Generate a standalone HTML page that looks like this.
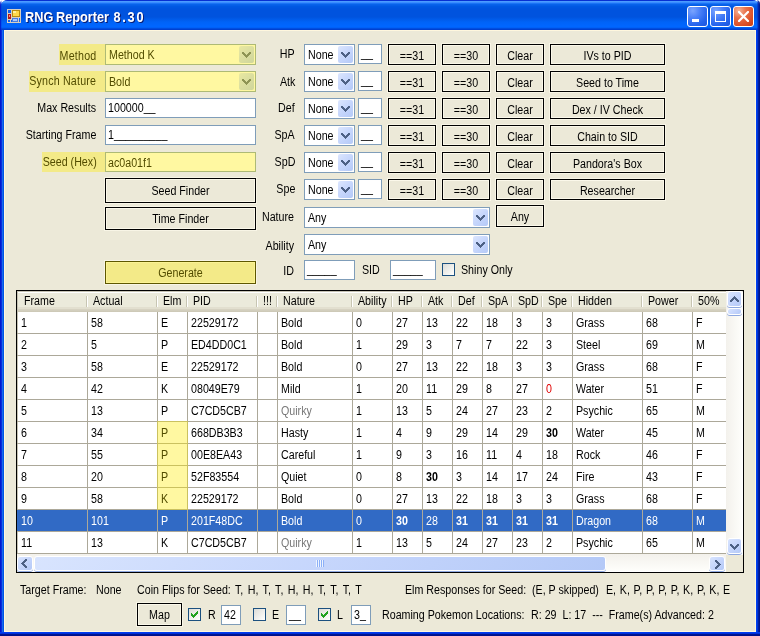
<!DOCTYPE html><html><head><meta charset="utf-8"><style>
html,body{margin:0;padding:0;width:760px;height:636px;overflow:hidden;background:#fff}
.b{position:absolute}
.t{position:absolute;font-family:"Liberation Sans", sans-serif;font-size:12px;line-height:13px;height:13px;white-space:pre;color:#000;transform:scaleX(0.89);transform-origin:0 0;}
.tr{transform-origin:100% 0;text-align:right}
.tc{transform-origin:50% 0;text-align:center}
.y{color:#524C00}
.u{position:relative;top:-1px}
.ddb{border-radius:2px;background:linear-gradient(135deg,#DCE6FE 0%,#C6D6FC 50%,#B4C9F7 100%)}
.sb{border:1px solid #fff;border-radius:3px;background:linear-gradient(135deg,#D8E4FE 0%,#C6D6FC 50%,#B4C9F7 100%);box-shadow:0 1px 0 #8EA8E0}
.cb{box-sizing:border-box;border:1px solid #1C5180;background:linear-gradient(135deg,#DCDCD7 0%,#F5F5F2 70%,#FFFFFF 100%)}
</style></head><body>
<div class="b" style="left:0;top:0;width:760px;height:636px;will-change:transform;overflow:hidden">

<div class="b" style="left:0;top:0;width:760px;height:636px;background:#0055E5;border-radius:8px 8px 0 0"></div>
<div class="b" style="left:0;top:0;width:760px;height:30px;border-radius:8px 8px 0 0;background:linear-gradient(to bottom,#0730D2 0px,#0730D2 1px,#4A9BFF 1px,#4A9BFF 2px,#3A8CFF 2px,#3A8CFF 3px,#1A73F5 3px,#1A73F5 4px,#0862EA 4px,#0862EA 5px,#0059E4 6px,#0053DE 9px,#0053DE 17px,#005AE8 19px,#0063F7 22px,#0066FF 26px,#0066FF 27px,#005CF0 28px,#0040D0 29px,#0040D0 30px)"></div>
<div class="b" style="left:0;top:0;width:4px;height:30px;border-top-left-radius:8px;background:linear-gradient(to right,rgba(0,25,207,0.85) 0,rgba(0,25,207,0.85) 1px,rgba(10,45,219,0.3) 1px,rgba(10,45,219,0.3) 2px,rgba(0,0,0,0) 2px)"></div>
<div class="b" style="left:756px;top:0;width:4px;height:30px;border-top-right-radius:8px;background:linear-gradient(to right,rgba(0,64,240,0) 0,rgba(0,64,240,0) 1px,rgba(0,40,200,0.5) 1px,rgba(0,40,200,0.5) 2px,rgba(0,32,160,0.85) 2px,rgba(0,32,160,0.85) 3px,rgba(0,19,140,0.95) 3px)"></div>
<div class="b" style="left:0;top:30px;width:4px;height:606px;background:linear-gradient(to right,#0019CF 0,#0019CF 1px,#0A2DDB 1px,#0A2DDB 2px,#166AEE 2px,#166AEE 3px,#0055E5 3px)"></div>
<div class="b" style="left:756px;top:30px;width:4px;height:606px;background:linear-gradient(to right,#0040F0 0,#0040F0 1px,#0035D8 1px,#0035D8 2px,#0020A0 2px,#0020A0 3px,#00138C 3px)"></div>
<div class="b" style="left:0;top:632px;width:760px;height:4px;background:linear-gradient(to bottom,#003CF0 0,#003CF0 1px,#0030DA 1px,#0030DA 2px,#00158F 2px,#00158F 3px,#00108A 3px)"></div>
<div class="b " style="left:4px;top:30px;width:752px;height:602px;background:#ECE9D8;border:1px solid #FFF7DE;box-sizing:border-box"></div>
<svg class="b" style="left:7px;top:9px" width="15" height="15" viewBox="0 0 15 15" shape-rendering="crispEdges">
<rect x="0" y="0" width="14" height="14" fill="#D8CFC0"/>
<rect x="1" y="1" width="3" height="3" fill="#1060F0"/>
<rect x="5" y="1" width="8" height="7" fill="#B88A10"/><rect x="6" y="2" width="6" height="5" fill="#FFD84A"/><rect x="6" y="2" width="3" height="2" fill="#FFF0A0"/>
<rect x="1" y="5" width="3" height="5" fill="#B01818"/><rect x="2" y="6" width="1" height="2" fill="#FF8080"/>
<rect x="1" y="11" width="2" height="2" fill="#1060F0"/><rect x="4" y="11" width="1" height="2" fill="#1060F0"/>
<rect x="5" y="9" width="6" height="4" fill="#4A7CE0"/><rect x="6" y="10" width="4" height="2" fill="#A8C8FF"/>
<rect x="12" y="9" width="1" height="4" fill="#1060F0"/>
</svg>
<div class="b" style="left:26px;top:9px;font:bold 14px 'Liberation Sans';color:#0A1A70;white-space:pre;line-height:18px;transform:scaleX(0.91);transform-origin:0 0">RNG<span style="margin-left:-1px"> </span>Reporter <span style="letter-spacing:1.9px;margin-left:1px">8.30</span></div>
<div class="b" style="left:25px;top:8px;font:bold 14px 'Liberation Sans';color:#fff;white-space:pre;line-height:18px;transform:scaleX(0.91);transform-origin:0 0">RNG<span style="margin-left:-1px"> </span>Reporter <span style="letter-spacing:1.9px;margin-left:1px">8.30</span></div>
<div class="b" style="left:687px;top:6px;width:21px;height:21px;box-sizing:border-box;border:1px solid #fff;border-radius:3px;background:radial-gradient(circle at 25% 20%,#7AA4FF 0%,#4A80F8 35%,#2563EC 70%,#1E55DC 100%)"></div>
<div class="b " style="left:692px;top:19px;width:7px;height:3px;background:#fff"></div>
<div class="b" style="left:710px;top:6px;width:21px;height:21px;box-sizing:border-box;border:1px solid #fff;border-radius:3px;background:radial-gradient(circle at 25% 20%,#7AA4FF 0%,#4A80F8 35%,#2563EC 70%,#1E55DC 100%)"></div>
<div class="b" style="left:715px;top:11px;width:11px;height:11px;box-sizing:border-box;border:1px solid #fff;border-top-width:3px"></div>
<div class="b" style="left:733px;top:6px;width:21px;height:21px;box-sizing:border-box;border:1px solid #fff;border-radius:3px;background:radial-gradient(circle at 25% 20%,#F4B498 0%,#E8704A 35%,#DC5028 70%,#C83C12 100%)"></div>
<svg class="b" style="left:738px;top:11px" width="11" height="11" viewBox="0 0 11 11"><path d="M1 1 L10 10 M10 1 L1 10" stroke="#fff" stroke-width="2.2" stroke-linecap="square"/></svg>
<div class="b " style="left:105px;top:44px;width:151px;height:21px;background:#fff;border:1px solid #7F9DB9;box-sizing:border-box"></div>
<div class="b ddb" style="left:239px;top:46px;width:15px;height:17px;"></div>
<svg class="b" style="left:242px;top:52px" width="9" height="6" shape-rendering="crispEdges" fill="#4D6185"><rect x="0" y="0" width="1" height="1"/><rect x="1" y="0" width="1" height="1"/><rect x="7" y="0" width="1" height="1"/><rect x="8" y="0" width="1" height="1"/><rect x="0" y="1" width="1" height="1"/><rect x="1" y="1" width="1" height="1"/><rect x="2" y="1" width="1" height="1"/><rect x="6" y="1" width="1" height="1"/><rect x="7" y="1" width="1" height="1"/><rect x="8" y="1" width="1" height="1"/><rect x="1" y="2" width="1" height="1"/><rect x="2" y="2" width="1" height="1"/><rect x="3" y="2" width="1" height="1"/><rect x="5" y="2" width="1" height="1"/><rect x="6" y="2" width="1" height="1"/><rect x="7" y="2" width="1" height="1"/><rect x="2" y="3" width="1" height="1"/><rect x="3" y="3" width="1" height="1"/><rect x="4" y="3" width="1" height="1"/><rect x="5" y="3" width="1" height="1"/><rect x="6" y="3" width="1" height="1"/><rect x="3" y="4" width="1" height="1"/><rect x="4" y="4" width="1" height="1"/><rect x="5" y="4" width="1" height="1"/><rect x="4" y="5" width="1" height="1"/></svg>
<div class="b " style="left:59px;top:44px;width:197px;height:21px;background:rgba(255,236,0,0.37)"></div>
<div class="t tr y" style="right:663px;top:50px;letter-spacing:0.25px">Method</div>
<div class="t y" style="left:109px;top:49px;">Method K</div>
<div class="b " style="left:105px;top:71px;width:151px;height:21px;background:#fff;border:1px solid #7F9DB9;box-sizing:border-box"></div>
<div class="b ddb" style="left:239px;top:73px;width:15px;height:17px;"></div>
<svg class="b" style="left:242px;top:79px" width="9" height="6" shape-rendering="crispEdges" fill="#4D6185"><rect x="0" y="0" width="1" height="1"/><rect x="1" y="0" width="1" height="1"/><rect x="7" y="0" width="1" height="1"/><rect x="8" y="0" width="1" height="1"/><rect x="0" y="1" width="1" height="1"/><rect x="1" y="1" width="1" height="1"/><rect x="2" y="1" width="1" height="1"/><rect x="6" y="1" width="1" height="1"/><rect x="7" y="1" width="1" height="1"/><rect x="8" y="1" width="1" height="1"/><rect x="1" y="2" width="1" height="1"/><rect x="2" y="2" width="1" height="1"/><rect x="3" y="2" width="1" height="1"/><rect x="5" y="2" width="1" height="1"/><rect x="6" y="2" width="1" height="1"/><rect x="7" y="2" width="1" height="1"/><rect x="2" y="3" width="1" height="1"/><rect x="3" y="3" width="1" height="1"/><rect x="4" y="3" width="1" height="1"/><rect x="5" y="3" width="1" height="1"/><rect x="6" y="3" width="1" height="1"/><rect x="3" y="4" width="1" height="1"/><rect x="4" y="4" width="1" height="1"/><rect x="5" y="4" width="1" height="1"/><rect x="4" y="5" width="1" height="1"/></svg>
<div class="b " style="left:29px;top:71px;width:227px;height:21px;background:rgba(255,236,0,0.37)"></div>
<div class="t tr y" style="right:664px;top:75px;letter-spacing:0.2px">Synch Nature</div>
<div class="t y" style="left:109px;top:76px;">Bold</div>
<div class="t tr " style="right:664px;top:102px;">Max Results</div>
<div class="b " style="left:105px;top:98px;width:151px;height:20px;background:#fff;border:1px solid #7F9DB9;box-sizing:border-box"></div>
<div class="t " style="left:108px;top:102px;">100000<span class="u">__</span></div>
<div class="t tr " style="right:664px;top:129px;">Starting Frame</div>
<div class="b " style="left:105px;top:125px;width:151px;height:20px;background:#fff;border:1px solid #7F9DB9;box-sizing:border-box"></div>
<div class="t " style="left:108px;top:129px;">1<span class="u">_________</span></div>
<div class="b " style="left:105px;top:152px;width:151px;height:20px;background:#fff;border:1px solid #7F9DB9;box-sizing:border-box"></div>
<div class="b " style="left:42px;top:152px;width:214px;height:20px;background:rgba(255,236,0,0.37)"></div>
<div class="t tr y" style="right:663px;top:156px;">Seed (Hex)</div>
<div class="t y" style="left:108px;top:157px;">ac0a01f1</div>
<div class="b " style="left:104px;top:177px;width:153px;height:27px;border:1px solid #F8F5E6;box-sizing:border-box"></div>
<div class="b " style="left:105px;top:178px;width:151px;height:25px;border:1px solid #000;box-sizing:border-box;box-shadow:inset 0 0 0 1px #FBF8EA"></div>
<div class="t tc " style="left:105px;width:151px;top:185px;">Seed Finder</div>
<div class="b " style="left:104px;top:206px;width:153px;height:25px;border:1px solid #F8F5E6;box-sizing:border-box"></div>
<div class="b " style="left:105px;top:207px;width:151px;height:23px;border:1px solid #000;box-sizing:border-box;box-shadow:inset 0 0 0 1px #FBF8EA"></div>
<div class="t tc " style="left:105px;width:151px;top:213px;">Time Finder</div>
<div class="b " style="left:104px;top:260px;width:153px;height:25px;border:1px solid #F8F5E6;box-sizing:border-box"></div>
<div class="b " style="left:105px;top:261px;width:151px;height:23px;border:1px solid #000;box-sizing:border-box;box-shadow:inset 0 0 0 1px #FBF8EA"></div>
<div class="b " style="left:105px;top:261px;width:151px;height:23px;background:rgba(255,236,0,0.37)"></div>
<div class="t tc y" style="left:105px;width:151px;top:267px;">Generate</div>
<div class="t tr " style="right:465px;top:48px;">HP</div>
<div class="b " style="left:304px;top:44px;width:51px;height:21px;background:#fff;border:1px solid #7F9DB9;box-sizing:border-box"></div>
<div class="b ddb" style="left:338px;top:46px;width:15px;height:17px;"></div>
<svg class="b" style="left:341px;top:52px" width="9" height="6" shape-rendering="crispEdges" fill="#4D6185"><rect x="0" y="0" width="1" height="1"/><rect x="1" y="0" width="1" height="1"/><rect x="7" y="0" width="1" height="1"/><rect x="8" y="0" width="1" height="1"/><rect x="0" y="1" width="1" height="1"/><rect x="1" y="1" width="1" height="1"/><rect x="2" y="1" width="1" height="1"/><rect x="6" y="1" width="1" height="1"/><rect x="7" y="1" width="1" height="1"/><rect x="8" y="1" width="1" height="1"/><rect x="1" y="2" width="1" height="1"/><rect x="2" y="2" width="1" height="1"/><rect x="3" y="2" width="1" height="1"/><rect x="5" y="2" width="1" height="1"/><rect x="6" y="2" width="1" height="1"/><rect x="7" y="2" width="1" height="1"/><rect x="2" y="3" width="1" height="1"/><rect x="3" y="3" width="1" height="1"/><rect x="4" y="3" width="1" height="1"/><rect x="5" y="3" width="1" height="1"/><rect x="6" y="3" width="1" height="1"/><rect x="3" y="4" width="1" height="1"/><rect x="4" y="4" width="1" height="1"/><rect x="5" y="4" width="1" height="1"/><rect x="4" y="5" width="1" height="1"/></svg>
<div class="t " style="left:308px;top:49px;">None</div>
<div class="b " style="left:358px;top:44px;width:24px;height:20px;background:#fff;border:1px solid #7F9DB9;box-sizing:border-box"></div>
<div class="t " style="left:361px;top:48px;"><span class="u">__</span></div>
<div class="b " style="left:387px;top:43px;width:50px;height:23px;border:1px solid #F8F5E6;box-sizing:border-box"></div>
<div class="b " style="left:388px;top:44px;width:48px;height:21px;border:1px solid #000;box-sizing:border-box;box-shadow:inset 0 0 0 1px #FBF8EA"></div>
<div class="t tc " style="left:388px;width:48px;top:50px;">==31</div>
<div class="b " style="left:441px;top:43px;width:50px;height:23px;border:1px solid #F8F5E6;box-sizing:border-box"></div>
<div class="b " style="left:442px;top:44px;width:48px;height:21px;border:1px solid #000;box-sizing:border-box;box-shadow:inset 0 0 0 1px #FBF8EA"></div>
<div class="t tc " style="left:442px;width:48px;top:50px;">==30</div>
<div class="b " style="left:495px;top:43px;width:50px;height:23px;border:1px solid #F8F5E6;box-sizing:border-box"></div>
<div class="b " style="left:496px;top:44px;width:48px;height:21px;border:1px solid #000;box-sizing:border-box;box-shadow:inset 0 0 0 1px #FBF8EA"></div>
<div class="t tc " style="left:496px;width:48px;top:50px;">Clear</div>
<div class="b " style="left:549px;top:43px;width:117px;height:23px;border:1px solid #F8F5E6;box-sizing:border-box"></div>
<div class="b " style="left:550px;top:44px;width:115px;height:21px;border:1px solid #000;box-sizing:border-box;box-shadow:inset 0 0 0 1px #FBF8EA"></div>
<div class="t tc " style="left:550px;width:115px;top:50px;">IVs to PID</div>
<div class="t tr " style="right:465px;top:76px;">Atk</div>
<div class="b " style="left:304px;top:71px;width:51px;height:21px;background:#fff;border:1px solid #7F9DB9;box-sizing:border-box"></div>
<div class="b ddb" style="left:338px;top:73px;width:15px;height:17px;"></div>
<svg class="b" style="left:341px;top:79px" width="9" height="6" shape-rendering="crispEdges" fill="#4D6185"><rect x="0" y="0" width="1" height="1"/><rect x="1" y="0" width="1" height="1"/><rect x="7" y="0" width="1" height="1"/><rect x="8" y="0" width="1" height="1"/><rect x="0" y="1" width="1" height="1"/><rect x="1" y="1" width="1" height="1"/><rect x="2" y="1" width="1" height="1"/><rect x="6" y="1" width="1" height="1"/><rect x="7" y="1" width="1" height="1"/><rect x="8" y="1" width="1" height="1"/><rect x="1" y="2" width="1" height="1"/><rect x="2" y="2" width="1" height="1"/><rect x="3" y="2" width="1" height="1"/><rect x="5" y="2" width="1" height="1"/><rect x="6" y="2" width="1" height="1"/><rect x="7" y="2" width="1" height="1"/><rect x="2" y="3" width="1" height="1"/><rect x="3" y="3" width="1" height="1"/><rect x="4" y="3" width="1" height="1"/><rect x="5" y="3" width="1" height="1"/><rect x="6" y="3" width="1" height="1"/><rect x="3" y="4" width="1" height="1"/><rect x="4" y="4" width="1" height="1"/><rect x="5" y="4" width="1" height="1"/><rect x="4" y="5" width="1" height="1"/></svg>
<div class="t " style="left:308px;top:76px;">None</div>
<div class="b " style="left:358px;top:71px;width:24px;height:20px;background:#fff;border:1px solid #7F9DB9;box-sizing:border-box"></div>
<div class="t " style="left:361px;top:75px;"><span class="u">__</span></div>
<div class="b " style="left:387px;top:70px;width:50px;height:23px;border:1px solid #F8F5E6;box-sizing:border-box"></div>
<div class="b " style="left:388px;top:71px;width:48px;height:21px;border:1px solid #000;box-sizing:border-box;box-shadow:inset 0 0 0 1px #FBF8EA"></div>
<div class="t tc " style="left:388px;width:48px;top:77px;">==31</div>
<div class="b " style="left:441px;top:70px;width:50px;height:23px;border:1px solid #F8F5E6;box-sizing:border-box"></div>
<div class="b " style="left:442px;top:71px;width:48px;height:21px;border:1px solid #000;box-sizing:border-box;box-shadow:inset 0 0 0 1px #FBF8EA"></div>
<div class="t tc " style="left:442px;width:48px;top:77px;">==30</div>
<div class="b " style="left:495px;top:70px;width:50px;height:23px;border:1px solid #F8F5E6;box-sizing:border-box"></div>
<div class="b " style="left:496px;top:71px;width:48px;height:21px;border:1px solid #000;box-sizing:border-box;box-shadow:inset 0 0 0 1px #FBF8EA"></div>
<div class="t tc " style="left:496px;width:48px;top:77px;">Clear</div>
<div class="b " style="left:549px;top:70px;width:117px;height:23px;border:1px solid #F8F5E6;box-sizing:border-box"></div>
<div class="b " style="left:550px;top:71px;width:115px;height:21px;border:1px solid #000;box-sizing:border-box;box-shadow:inset 0 0 0 1px #FBF8EA"></div>
<div class="t tc " style="left:550px;width:115px;top:77px;">Seed to Time</div>
<div class="t tr " style="right:465px;top:102px;">Def</div>
<div class="b " style="left:304px;top:98px;width:51px;height:21px;background:#fff;border:1px solid #7F9DB9;box-sizing:border-box"></div>
<div class="b ddb" style="left:338px;top:100px;width:15px;height:17px;"></div>
<svg class="b" style="left:341px;top:106px" width="9" height="6" shape-rendering="crispEdges" fill="#4D6185"><rect x="0" y="0" width="1" height="1"/><rect x="1" y="0" width="1" height="1"/><rect x="7" y="0" width="1" height="1"/><rect x="8" y="0" width="1" height="1"/><rect x="0" y="1" width="1" height="1"/><rect x="1" y="1" width="1" height="1"/><rect x="2" y="1" width="1" height="1"/><rect x="6" y="1" width="1" height="1"/><rect x="7" y="1" width="1" height="1"/><rect x="8" y="1" width="1" height="1"/><rect x="1" y="2" width="1" height="1"/><rect x="2" y="2" width="1" height="1"/><rect x="3" y="2" width="1" height="1"/><rect x="5" y="2" width="1" height="1"/><rect x="6" y="2" width="1" height="1"/><rect x="7" y="2" width="1" height="1"/><rect x="2" y="3" width="1" height="1"/><rect x="3" y="3" width="1" height="1"/><rect x="4" y="3" width="1" height="1"/><rect x="5" y="3" width="1" height="1"/><rect x="6" y="3" width="1" height="1"/><rect x="3" y="4" width="1" height="1"/><rect x="4" y="4" width="1" height="1"/><rect x="5" y="4" width="1" height="1"/><rect x="4" y="5" width="1" height="1"/></svg>
<div class="t " style="left:308px;top:103px;">None</div>
<div class="b " style="left:358px;top:98px;width:24px;height:20px;background:#fff;border:1px solid #7F9DB9;box-sizing:border-box"></div>
<div class="t " style="left:361px;top:102px;"><span class="u">__</span></div>
<div class="b " style="left:387px;top:97px;width:50px;height:23px;border:1px solid #F8F5E6;box-sizing:border-box"></div>
<div class="b " style="left:388px;top:98px;width:48px;height:21px;border:1px solid #000;box-sizing:border-box;box-shadow:inset 0 0 0 1px #FBF8EA"></div>
<div class="t tc " style="left:388px;width:48px;top:104px;">==31</div>
<div class="b " style="left:441px;top:97px;width:50px;height:23px;border:1px solid #F8F5E6;box-sizing:border-box"></div>
<div class="b " style="left:442px;top:98px;width:48px;height:21px;border:1px solid #000;box-sizing:border-box;box-shadow:inset 0 0 0 1px #FBF8EA"></div>
<div class="t tc " style="left:442px;width:48px;top:104px;">==30</div>
<div class="b " style="left:495px;top:97px;width:50px;height:23px;border:1px solid #F8F5E6;box-sizing:border-box"></div>
<div class="b " style="left:496px;top:98px;width:48px;height:21px;border:1px solid #000;box-sizing:border-box;box-shadow:inset 0 0 0 1px #FBF8EA"></div>
<div class="t tc " style="left:496px;width:48px;top:104px;">Clear</div>
<div class="b " style="left:549px;top:97px;width:117px;height:23px;border:1px solid #F8F5E6;box-sizing:border-box"></div>
<div class="b " style="left:550px;top:98px;width:115px;height:21px;border:1px solid #000;box-sizing:border-box;box-shadow:inset 0 0 0 1px #FBF8EA"></div>
<div class="t tc " style="left:550px;width:115px;top:104px;">Dex / IV Check</div>
<div class="t tr " style="right:465px;top:129px;">SpA</div>
<div class="b " style="left:304px;top:125px;width:51px;height:21px;background:#fff;border:1px solid #7F9DB9;box-sizing:border-box"></div>
<div class="b ddb" style="left:338px;top:127px;width:15px;height:17px;"></div>
<svg class="b" style="left:341px;top:133px" width="9" height="6" shape-rendering="crispEdges" fill="#4D6185"><rect x="0" y="0" width="1" height="1"/><rect x="1" y="0" width="1" height="1"/><rect x="7" y="0" width="1" height="1"/><rect x="8" y="0" width="1" height="1"/><rect x="0" y="1" width="1" height="1"/><rect x="1" y="1" width="1" height="1"/><rect x="2" y="1" width="1" height="1"/><rect x="6" y="1" width="1" height="1"/><rect x="7" y="1" width="1" height="1"/><rect x="8" y="1" width="1" height="1"/><rect x="1" y="2" width="1" height="1"/><rect x="2" y="2" width="1" height="1"/><rect x="3" y="2" width="1" height="1"/><rect x="5" y="2" width="1" height="1"/><rect x="6" y="2" width="1" height="1"/><rect x="7" y="2" width="1" height="1"/><rect x="2" y="3" width="1" height="1"/><rect x="3" y="3" width="1" height="1"/><rect x="4" y="3" width="1" height="1"/><rect x="5" y="3" width="1" height="1"/><rect x="6" y="3" width="1" height="1"/><rect x="3" y="4" width="1" height="1"/><rect x="4" y="4" width="1" height="1"/><rect x="5" y="4" width="1" height="1"/><rect x="4" y="5" width="1" height="1"/></svg>
<div class="t " style="left:308px;top:130px;">None</div>
<div class="b " style="left:358px;top:125px;width:24px;height:20px;background:#fff;border:1px solid #7F9DB9;box-sizing:border-box"></div>
<div class="t " style="left:361px;top:129px;"><span class="u">__</span></div>
<div class="b " style="left:387px;top:124px;width:50px;height:23px;border:1px solid #F8F5E6;box-sizing:border-box"></div>
<div class="b " style="left:388px;top:125px;width:48px;height:21px;border:1px solid #000;box-sizing:border-box;box-shadow:inset 0 0 0 1px #FBF8EA"></div>
<div class="t tc " style="left:388px;width:48px;top:131px;">==31</div>
<div class="b " style="left:441px;top:124px;width:50px;height:23px;border:1px solid #F8F5E6;box-sizing:border-box"></div>
<div class="b " style="left:442px;top:125px;width:48px;height:21px;border:1px solid #000;box-sizing:border-box;box-shadow:inset 0 0 0 1px #FBF8EA"></div>
<div class="t tc " style="left:442px;width:48px;top:131px;">==30</div>
<div class="b " style="left:495px;top:124px;width:50px;height:23px;border:1px solid #F8F5E6;box-sizing:border-box"></div>
<div class="b " style="left:496px;top:125px;width:48px;height:21px;border:1px solid #000;box-sizing:border-box;box-shadow:inset 0 0 0 1px #FBF8EA"></div>
<div class="t tc " style="left:496px;width:48px;top:131px;">Clear</div>
<div class="b " style="left:549px;top:124px;width:117px;height:23px;border:1px solid #F8F5E6;box-sizing:border-box"></div>
<div class="b " style="left:550px;top:125px;width:115px;height:21px;border:1px solid #000;box-sizing:border-box;box-shadow:inset 0 0 0 1px #FBF8EA"></div>
<div class="t tc " style="left:550px;width:115px;top:131px;">Chain to SID</div>
<div class="t tr " style="right:465px;top:156px;">SpD</div>
<div class="b " style="left:304px;top:152px;width:51px;height:21px;background:#fff;border:1px solid #7F9DB9;box-sizing:border-box"></div>
<div class="b ddb" style="left:338px;top:154px;width:15px;height:17px;"></div>
<svg class="b" style="left:341px;top:160px" width="9" height="6" shape-rendering="crispEdges" fill="#4D6185"><rect x="0" y="0" width="1" height="1"/><rect x="1" y="0" width="1" height="1"/><rect x="7" y="0" width="1" height="1"/><rect x="8" y="0" width="1" height="1"/><rect x="0" y="1" width="1" height="1"/><rect x="1" y="1" width="1" height="1"/><rect x="2" y="1" width="1" height="1"/><rect x="6" y="1" width="1" height="1"/><rect x="7" y="1" width="1" height="1"/><rect x="8" y="1" width="1" height="1"/><rect x="1" y="2" width="1" height="1"/><rect x="2" y="2" width="1" height="1"/><rect x="3" y="2" width="1" height="1"/><rect x="5" y="2" width="1" height="1"/><rect x="6" y="2" width="1" height="1"/><rect x="7" y="2" width="1" height="1"/><rect x="2" y="3" width="1" height="1"/><rect x="3" y="3" width="1" height="1"/><rect x="4" y="3" width="1" height="1"/><rect x="5" y="3" width="1" height="1"/><rect x="6" y="3" width="1" height="1"/><rect x="3" y="4" width="1" height="1"/><rect x="4" y="4" width="1" height="1"/><rect x="5" y="4" width="1" height="1"/><rect x="4" y="5" width="1" height="1"/></svg>
<div class="t " style="left:308px;top:157px;">None</div>
<div class="b " style="left:358px;top:152px;width:24px;height:20px;background:#fff;border:1px solid #7F9DB9;box-sizing:border-box"></div>
<div class="t " style="left:361px;top:156px;"><span class="u">__</span></div>
<div class="b " style="left:387px;top:151px;width:50px;height:23px;border:1px solid #F8F5E6;box-sizing:border-box"></div>
<div class="b " style="left:388px;top:152px;width:48px;height:21px;border:1px solid #000;box-sizing:border-box;box-shadow:inset 0 0 0 1px #FBF8EA"></div>
<div class="t tc " style="left:388px;width:48px;top:158px;">==31</div>
<div class="b " style="left:441px;top:151px;width:50px;height:23px;border:1px solid #F8F5E6;box-sizing:border-box"></div>
<div class="b " style="left:442px;top:152px;width:48px;height:21px;border:1px solid #000;box-sizing:border-box;box-shadow:inset 0 0 0 1px #FBF8EA"></div>
<div class="t tc " style="left:442px;width:48px;top:158px;">==30</div>
<div class="b " style="left:495px;top:151px;width:50px;height:23px;border:1px solid #F8F5E6;box-sizing:border-box"></div>
<div class="b " style="left:496px;top:152px;width:48px;height:21px;border:1px solid #000;box-sizing:border-box;box-shadow:inset 0 0 0 1px #FBF8EA"></div>
<div class="t tc " style="left:496px;width:48px;top:158px;">Clear</div>
<div class="b " style="left:549px;top:151px;width:117px;height:23px;border:1px solid #F8F5E6;box-sizing:border-box"></div>
<div class="b " style="left:550px;top:152px;width:115px;height:21px;border:1px solid #000;box-sizing:border-box;box-shadow:inset 0 0 0 1px #FBF8EA"></div>
<div class="t tc " style="left:550px;width:115px;top:158px;">Pandora's Box</div>
<div class="t tr " style="right:465px;top:183px;">Spe</div>
<div class="b " style="left:304px;top:179px;width:51px;height:21px;background:#fff;border:1px solid #7F9DB9;box-sizing:border-box"></div>
<div class="b ddb" style="left:338px;top:181px;width:15px;height:17px;"></div>
<svg class="b" style="left:341px;top:187px" width="9" height="6" shape-rendering="crispEdges" fill="#4D6185"><rect x="0" y="0" width="1" height="1"/><rect x="1" y="0" width="1" height="1"/><rect x="7" y="0" width="1" height="1"/><rect x="8" y="0" width="1" height="1"/><rect x="0" y="1" width="1" height="1"/><rect x="1" y="1" width="1" height="1"/><rect x="2" y="1" width="1" height="1"/><rect x="6" y="1" width="1" height="1"/><rect x="7" y="1" width="1" height="1"/><rect x="8" y="1" width="1" height="1"/><rect x="1" y="2" width="1" height="1"/><rect x="2" y="2" width="1" height="1"/><rect x="3" y="2" width="1" height="1"/><rect x="5" y="2" width="1" height="1"/><rect x="6" y="2" width="1" height="1"/><rect x="7" y="2" width="1" height="1"/><rect x="2" y="3" width="1" height="1"/><rect x="3" y="3" width="1" height="1"/><rect x="4" y="3" width="1" height="1"/><rect x="5" y="3" width="1" height="1"/><rect x="6" y="3" width="1" height="1"/><rect x="3" y="4" width="1" height="1"/><rect x="4" y="4" width="1" height="1"/><rect x="5" y="4" width="1" height="1"/><rect x="4" y="5" width="1" height="1"/></svg>
<div class="t " style="left:308px;top:184px;">None</div>
<div class="b " style="left:358px;top:179px;width:24px;height:20px;background:#fff;border:1px solid #7F9DB9;box-sizing:border-box"></div>
<div class="t " style="left:361px;top:183px;"><span class="u">__</span></div>
<div class="b " style="left:387px;top:178px;width:50px;height:23px;border:1px solid #F8F5E6;box-sizing:border-box"></div>
<div class="b " style="left:388px;top:179px;width:48px;height:21px;border:1px solid #000;box-sizing:border-box;box-shadow:inset 0 0 0 1px #FBF8EA"></div>
<div class="t tc " style="left:388px;width:48px;top:185px;">==31</div>
<div class="b " style="left:441px;top:178px;width:50px;height:23px;border:1px solid #F8F5E6;box-sizing:border-box"></div>
<div class="b " style="left:442px;top:179px;width:48px;height:21px;border:1px solid #000;box-sizing:border-box;box-shadow:inset 0 0 0 1px #FBF8EA"></div>
<div class="t tc " style="left:442px;width:48px;top:185px;">==30</div>
<div class="b " style="left:495px;top:178px;width:50px;height:23px;border:1px solid #F8F5E6;box-sizing:border-box"></div>
<div class="b " style="left:496px;top:179px;width:48px;height:21px;border:1px solid #000;box-sizing:border-box;box-shadow:inset 0 0 0 1px #FBF8EA"></div>
<div class="t tc " style="left:496px;width:48px;top:185px;">Clear</div>
<div class="b " style="left:549px;top:178px;width:117px;height:23px;border:1px solid #F8F5E6;box-sizing:border-box"></div>
<div class="b " style="left:550px;top:179px;width:115px;height:21px;border:1px solid #000;box-sizing:border-box;box-shadow:inset 0 0 0 1px #FBF8EA"></div>
<div class="t tc " style="left:550px;width:115px;top:185px;">Researcher</div>
<div class="t tr " style="right:466px;top:211px;">Nature</div>
<div class="b " style="left:304px;top:207px;width:186px;height:21px;background:#fff;border:1px solid #7F9DB9;box-sizing:border-box"></div>
<div class="b ddb" style="left:473px;top:209px;width:15px;height:17px;"></div>
<svg class="b" style="left:476px;top:215px" width="9" height="6" shape-rendering="crispEdges" fill="#4D6185"><rect x="0" y="0" width="1" height="1"/><rect x="1" y="0" width="1" height="1"/><rect x="7" y="0" width="1" height="1"/><rect x="8" y="0" width="1" height="1"/><rect x="0" y="1" width="1" height="1"/><rect x="1" y="1" width="1" height="1"/><rect x="2" y="1" width="1" height="1"/><rect x="6" y="1" width="1" height="1"/><rect x="7" y="1" width="1" height="1"/><rect x="8" y="1" width="1" height="1"/><rect x="1" y="2" width="1" height="1"/><rect x="2" y="2" width="1" height="1"/><rect x="3" y="2" width="1" height="1"/><rect x="5" y="2" width="1" height="1"/><rect x="6" y="2" width="1" height="1"/><rect x="7" y="2" width="1" height="1"/><rect x="2" y="3" width="1" height="1"/><rect x="3" y="3" width="1" height="1"/><rect x="4" y="3" width="1" height="1"/><rect x="5" y="3" width="1" height="1"/><rect x="6" y="3" width="1" height="1"/><rect x="3" y="4" width="1" height="1"/><rect x="4" y="4" width="1" height="1"/><rect x="5" y="4" width="1" height="1"/><rect x="4" y="5" width="1" height="1"/></svg>
<div class="t " style="left:308px;top:212px;">Any</div>
<div class="b " style="left:495px;top:204px;width:50px;height:24px;border:1px solid #F8F5E6;box-sizing:border-box"></div>
<div class="b " style="left:496px;top:205px;width:48px;height:22px;border:1px solid #000;box-sizing:border-box;box-shadow:inset 0 0 0 1px #FBF8EA"></div>
<div class="t tc " style="left:496px;width:48px;top:211px;">Any</div>
<div class="t tr " style="right:466px;top:240px;">Ability</div>
<div class="b " style="left:304px;top:234px;width:186px;height:21px;background:#fff;border:1px solid #7F9DB9;box-sizing:border-box"></div>
<div class="b ddb" style="left:473px;top:236px;width:15px;height:17px;"></div>
<svg class="b" style="left:476px;top:242px" width="9" height="6" shape-rendering="crispEdges" fill="#4D6185"><rect x="0" y="0" width="1" height="1"/><rect x="1" y="0" width="1" height="1"/><rect x="7" y="0" width="1" height="1"/><rect x="8" y="0" width="1" height="1"/><rect x="0" y="1" width="1" height="1"/><rect x="1" y="1" width="1" height="1"/><rect x="2" y="1" width="1" height="1"/><rect x="6" y="1" width="1" height="1"/><rect x="7" y="1" width="1" height="1"/><rect x="8" y="1" width="1" height="1"/><rect x="1" y="2" width="1" height="1"/><rect x="2" y="2" width="1" height="1"/><rect x="3" y="2" width="1" height="1"/><rect x="5" y="2" width="1" height="1"/><rect x="6" y="2" width="1" height="1"/><rect x="7" y="2" width="1" height="1"/><rect x="2" y="3" width="1" height="1"/><rect x="3" y="3" width="1" height="1"/><rect x="4" y="3" width="1" height="1"/><rect x="5" y="3" width="1" height="1"/><rect x="6" y="3" width="1" height="1"/><rect x="3" y="4" width="1" height="1"/><rect x="4" y="4" width="1" height="1"/><rect x="5" y="4" width="1" height="1"/><rect x="4" y="5" width="1" height="1"/></svg>
<div class="t " style="left:308px;top:239px;">Any</div>
<div class="t tr " style="right:466px;top:265px;">ID</div>
<div class="b " style="left:304px;top:260px;width:51px;height:20px;background:#fff;border:1px solid #7F9DB9;box-sizing:border-box"></div>
<div class="t " style="left:307px;top:264px;"><span class="u">_____</span></div>
<div class="t " style="left:362px;top:264px;">SID</div>
<div class="b " style="left:390px;top:260px;width:46px;height:20px;background:#fff;border:1px solid #7F9DB9;box-sizing:border-box"></div>
<div class="t " style="left:393px;top:264px;"><span class="u">_____</span></div>
<div class="b cb" style="left:442px;top:263px;width:13px;height:13px;"></div>
<div class="t " style="left:461px;top:264px;">Shiny Only</div>
<div class="b " style="left:16px;top:290px;width:728px;height:283px;background:#fff;border:1px solid #000;box-sizing:border-box"></div>
<div class="b " style="left:17px;top:291px;width:726px;height:281px;border-left:1px solid #C5C2B2;border-top:1px solid #C5C2B2;border-right:1px solid #fff;border-bottom:1px solid #fff;box-sizing:border-box"></div>
<div class="b" style="left:18px;top:292px;width:708px;height:20px;background:linear-gradient(to bottom,#FFFFFF 0,#FFFFFF 1px,#EBEADB 1px,#EBEADB 15px,#E2DFCF 15px,#E2DFCF 17px,#D8D4C3 17px,#D0CCBB 19px,#CBC7B4 20px)"></div>
<div class="b " style="left:17px;top:333px;width:709px;height:1px;background:#ACA899"></div>
<div class="b " style="left:17px;top:355px;width:709px;height:1px;background:#ACA899"></div>
<div class="b " style="left:17px;top:377px;width:709px;height:1px;background:#ACA899"></div>
<div class="b " style="left:17px;top:399px;width:709px;height:1px;background:#ACA899"></div>
<div class="b " style="left:17px;top:421px;width:709px;height:1px;background:#ACA899"></div>
<div class="b " style="left:17px;top:443px;width:709px;height:1px;background:#ACA899"></div>
<div class="b " style="left:17px;top:465px;width:709px;height:1px;background:#ACA899"></div>
<div class="b " style="left:17px;top:487px;width:709px;height:1px;background:#ACA899"></div>
<div class="b " style="left:17px;top:509px;width:709px;height:1px;background:#ACA899"></div>
<div class="b " style="left:17px;top:510px;width:709px;height:22px;background:#316AC5"></div>
<div class="b " style="left:17px;top:531px;width:709px;height:1px;background:#ACA899"></div>
<div class="b " style="left:17px;top:553px;width:709px;height:1px;background:#ACA899"></div>
<div class="b " style="left:87px;top:312px;width:1px;height:242px;background:#ACA899"></div>
<div class="b " style="left:157px;top:312px;width:1px;height:242px;background:#ACA899"></div>
<div class="b " style="left:187px;top:312px;width:1px;height:242px;background:#ACA899"></div>
<div class="b " style="left:257px;top:312px;width:1px;height:242px;background:#ACA899"></div>
<div class="b " style="left:277px;top:312px;width:1px;height:242px;background:#ACA899"></div>
<div class="b " style="left:352px;top:312px;width:1px;height:242px;background:#ACA899"></div>
<div class="b " style="left:392px;top:312px;width:1px;height:242px;background:#ACA899"></div>
<div class="b " style="left:422px;top:312px;width:1px;height:242px;background:#ACA899"></div>
<div class="b " style="left:452px;top:312px;width:1px;height:242px;background:#ACA899"></div>
<div class="b " style="left:482px;top:312px;width:1px;height:242px;background:#ACA899"></div>
<div class="b " style="left:512px;top:312px;width:1px;height:242px;background:#ACA899"></div>
<div class="b " style="left:542px;top:312px;width:1px;height:242px;background:#ACA899"></div>
<div class="b " style="left:572px;top:312px;width:1px;height:242px;background:#ACA899"></div>
<div class="b " style="left:642px;top:312px;width:1px;height:242px;background:#ACA899"></div>
<div class="b " style="left:692px;top:312px;width:1px;height:242px;background:#ACA899"></div>
<div class="b " style="left:157px;top:421px;width:31px;height:89px;background:rgba(255,236,0,0.37)"></div>
<div class="t " style="left:21px;top:317px;">1</div>
<div class="t " style="left:91px;top:317px;">58</div>
<div class="t " style="left:161px;top:317px;">E</div>
<div class="t " style="left:191px;top:317px;">22529172</div>
<div class="t " style="left:281px;top:317px;">Bold</div>
<div class="t " style="left:356px;top:317px;">0</div>
<div class="t " style="left:396px;top:317px;">27</div>
<div class="t " style="left:426px;top:317px;">13</div>
<div class="t " style="left:456px;top:317px;">22</div>
<div class="t " style="left:486px;top:317px;">18</div>
<div class="t " style="left:516px;top:317px;">3</div>
<div class="t " style="left:546px;top:317px;">3</div>
<div class="t " style="left:576px;top:317px;">Grass</div>
<div class="t " style="left:646px;top:317px;">68</div>
<div class="t " style="left:696px;top:317px;">F</div>
<div class="t " style="left:21px;top:339px;">2</div>
<div class="t " style="left:91px;top:339px;">5</div>
<div class="t " style="left:161px;top:339px;">P</div>
<div class="t " style="left:191px;top:339px;">ED4DD0C1</div>
<div class="t " style="left:281px;top:339px;">Bold</div>
<div class="t " style="left:356px;top:339px;">1</div>
<div class="t " style="left:396px;top:339px;">29</div>
<div class="t " style="left:426px;top:339px;">3</div>
<div class="t " style="left:456px;top:339px;">7</div>
<div class="t " style="left:486px;top:339px;">7</div>
<div class="t " style="left:516px;top:339px;">22</div>
<div class="t " style="left:546px;top:339px;">3</div>
<div class="t " style="left:576px;top:339px;">Steel</div>
<div class="t " style="left:646px;top:339px;">69</div>
<div class="t " style="left:696px;top:339px;">M</div>
<div class="t " style="left:21px;top:361px;">3</div>
<div class="t " style="left:91px;top:361px;">58</div>
<div class="t " style="left:161px;top:361px;">E</div>
<div class="t " style="left:191px;top:361px;">22529172</div>
<div class="t " style="left:281px;top:361px;">Bold</div>
<div class="t " style="left:356px;top:361px;">0</div>
<div class="t " style="left:396px;top:361px;">27</div>
<div class="t " style="left:426px;top:361px;">13</div>
<div class="t " style="left:456px;top:361px;">22</div>
<div class="t " style="left:486px;top:361px;">18</div>
<div class="t " style="left:516px;top:361px;">3</div>
<div class="t " style="left:546px;top:361px;">3</div>
<div class="t " style="left:576px;top:361px;">Grass</div>
<div class="t " style="left:646px;top:361px;">68</div>
<div class="t " style="left:696px;top:361px;">F</div>
<div class="t " style="left:21px;top:383px;">4</div>
<div class="t " style="left:91px;top:383px;">42</div>
<div class="t " style="left:161px;top:383px;">K</div>
<div class="t " style="left:191px;top:383px;">08049E79</div>
<div class="t " style="left:281px;top:383px;">Mild</div>
<div class="t " style="left:356px;top:383px;">1</div>
<div class="t " style="left:396px;top:383px;">20</div>
<div class="t " style="left:426px;top:383px;">11</div>
<div class="t " style="left:456px;top:383px;">29</div>
<div class="t " style="left:486px;top:383px;">8</div>
<div class="t " style="left:516px;top:383px;">27</div>
<div class="t " style="left:546px;top:383px;color:#E00000;">0</div>
<div class="t " style="left:576px;top:383px;">Water</div>
<div class="t " style="left:646px;top:383px;">51</div>
<div class="t " style="left:696px;top:383px;">F</div>
<div class="t " style="left:21px;top:405px;">5</div>
<div class="t " style="left:91px;top:405px;">13</div>
<div class="t " style="left:161px;top:405px;">P</div>
<div class="t " style="left:191px;top:405px;">C7CD5CB7</div>
<div class="t " style="left:281px;top:405px;color:#787878;">Quirky</div>
<div class="t " style="left:356px;top:405px;">1</div>
<div class="t " style="left:396px;top:405px;">13</div>
<div class="t " style="left:426px;top:405px;">5</div>
<div class="t " style="left:456px;top:405px;">24</div>
<div class="t " style="left:486px;top:405px;">27</div>
<div class="t " style="left:516px;top:405px;">23</div>
<div class="t " style="left:546px;top:405px;">2</div>
<div class="t " style="left:576px;top:405px;">Psychic</div>
<div class="t " style="left:646px;top:405px;">65</div>
<div class="t " style="left:696px;top:405px;">M</div>
<div class="t " style="left:21px;top:427px;">6</div>
<div class="t " style="left:91px;top:427px;">34</div>
<div class="t y" style="left:161px;top:427px;">P</div>
<div class="t " style="left:191px;top:427px;">668DB3B3</div>
<div class="t " style="left:281px;top:427px;">Hasty</div>
<div class="t " style="left:356px;top:427px;">1</div>
<div class="t " style="left:396px;top:427px;">4</div>
<div class="t " style="left:426px;top:427px;">9</div>
<div class="t " style="left:456px;top:427px;">29</div>
<div class="t " style="left:486px;top:427px;">14</div>
<div class="t " style="left:516px;top:427px;">29</div>
<div class="t " style="left:546px;top:427px;font-weight:bold;">30</div>
<div class="t " style="left:576px;top:427px;">Water</div>
<div class="t " style="left:646px;top:427px;">45</div>
<div class="t " style="left:696px;top:427px;">M</div>
<div class="t " style="left:21px;top:449px;">7</div>
<div class="t " style="left:91px;top:449px;">55</div>
<div class="t y" style="left:161px;top:449px;">P</div>
<div class="t " style="left:191px;top:449px;">00E8EA43</div>
<div class="t " style="left:281px;top:449px;">Careful</div>
<div class="t " style="left:356px;top:449px;">1</div>
<div class="t " style="left:396px;top:449px;">9</div>
<div class="t " style="left:426px;top:449px;">3</div>
<div class="t " style="left:456px;top:449px;">16</div>
<div class="t " style="left:486px;top:449px;">11</div>
<div class="t " style="left:516px;top:449px;">4</div>
<div class="t " style="left:546px;top:449px;">18</div>
<div class="t " style="left:576px;top:449px;">Rock</div>
<div class="t " style="left:646px;top:449px;">46</div>
<div class="t " style="left:696px;top:449px;">F</div>
<div class="t " style="left:21px;top:471px;">8</div>
<div class="t " style="left:91px;top:471px;">20</div>
<div class="t y" style="left:161px;top:471px;">P</div>
<div class="t " style="left:191px;top:471px;">52F83554</div>
<div class="t " style="left:281px;top:471px;">Quiet</div>
<div class="t " style="left:356px;top:471px;">0</div>
<div class="t " style="left:396px;top:471px;">8</div>
<div class="t " style="left:426px;top:471px;font-weight:bold;">30</div>
<div class="t " style="left:456px;top:471px;">3</div>
<div class="t " style="left:486px;top:471px;">14</div>
<div class="t " style="left:516px;top:471px;">17</div>
<div class="t " style="left:546px;top:471px;">24</div>
<div class="t " style="left:576px;top:471px;">Fire</div>
<div class="t " style="left:646px;top:471px;">43</div>
<div class="t " style="left:696px;top:471px;">F</div>
<div class="t " style="left:21px;top:493px;">9</div>
<div class="t " style="left:91px;top:493px;">58</div>
<div class="t y" style="left:161px;top:493px;">K</div>
<div class="t " style="left:191px;top:493px;">22529172</div>
<div class="t " style="left:281px;top:493px;">Bold</div>
<div class="t " style="left:356px;top:493px;">0</div>
<div class="t " style="left:396px;top:493px;">27</div>
<div class="t " style="left:426px;top:493px;">13</div>
<div class="t " style="left:456px;top:493px;">22</div>
<div class="t " style="left:486px;top:493px;">18</div>
<div class="t " style="left:516px;top:493px;">3</div>
<div class="t " style="left:546px;top:493px;">3</div>
<div class="t " style="left:576px;top:493px;">Grass</div>
<div class="t " style="left:646px;top:493px;">68</div>
<div class="t " style="left:696px;top:493px;">F</div>
<div class="t " style="left:21px;top:515px;color:#fff;">10</div>
<div class="t " style="left:91px;top:515px;color:#fff;">101</div>
<div class="t " style="left:161px;top:515px;color:#fff;">P</div>
<div class="t " style="left:191px;top:515px;color:#fff;">201F48DC</div>
<div class="t " style="left:281px;top:515px;color:#fff;">Bold</div>
<div class="t " style="left:356px;top:515px;color:#fff;">0</div>
<div class="t " style="left:396px;top:515px;color:#fff;font-weight:bold;">30</div>
<div class="t " style="left:426px;top:515px;color:#fff;">28</div>
<div class="t " style="left:456px;top:515px;color:#fff;font-weight:bold;">31</div>
<div class="t " style="left:486px;top:515px;color:#fff;font-weight:bold;">31</div>
<div class="t " style="left:516px;top:515px;color:#fff;font-weight:bold;">31</div>
<div class="t " style="left:546px;top:515px;color:#fff;font-weight:bold;">31</div>
<div class="t " style="left:576px;top:515px;color:#fff;">Dragon</div>
<div class="t " style="left:646px;top:515px;color:#fff;">68</div>
<div class="t " style="left:696px;top:515px;color:#fff;">M</div>
<div class="t " style="left:21px;top:537px;">11</div>
<div class="t " style="left:91px;top:537px;">13</div>
<div class="t " style="left:161px;top:537px;">K</div>
<div class="t " style="left:191px;top:537px;">C7CD5CB7</div>
<div class="t " style="left:281px;top:537px;color:#787878;">Quirky</div>
<div class="t " style="left:356px;top:537px;">1</div>
<div class="t " style="left:396px;top:537px;">13</div>
<div class="t " style="left:426px;top:537px;">5</div>
<div class="t " style="left:456px;top:537px;">24</div>
<div class="t " style="left:486px;top:537px;">27</div>
<div class="t " style="left:516px;top:537px;">23</div>
<div class="t " style="left:546px;top:537px;">2</div>
<div class="t " style="left:576px;top:537px;">Psychic</div>
<div class="t " style="left:646px;top:537px;">65</div>
<div class="t " style="left:696px;top:537px;">M</div>
<div class="t " style="left:24px;top:295px;">Frame</div>
<div class="b " style="left:86px;top:296px;width:1px;height:11px;background:#C7C5B2"></div>
<div class="b " style="left:87px;top:296px;width:1px;height:11px;background:#fff"></div>
<div class="t " style="left:93px;top:295px;">Actual</div>
<div class="b " style="left:156px;top:296px;width:1px;height:11px;background:#C7C5B2"></div>
<div class="b " style="left:157px;top:296px;width:1px;height:11px;background:#fff"></div>
<div class="t " style="left:163px;top:295px;">Elm</div>
<div class="b " style="left:186px;top:296px;width:1px;height:11px;background:#C7C5B2"></div>
<div class="b " style="left:187px;top:296px;width:1px;height:11px;background:#fff"></div>
<div class="t " style="left:193px;top:295px;">PID</div>
<div class="b " style="left:256px;top:296px;width:1px;height:11px;background:#C7C5B2"></div>
<div class="b " style="left:257px;top:296px;width:1px;height:11px;background:#fff"></div>
<div class="t " style="left:263px;top:295px;">!!!</div>
<div class="b " style="left:276px;top:296px;width:1px;height:11px;background:#C7C5B2"></div>
<div class="b " style="left:277px;top:296px;width:1px;height:11px;background:#fff"></div>
<div class="t " style="left:283px;top:295px;">Nature</div>
<div class="b " style="left:351px;top:296px;width:1px;height:11px;background:#C7C5B2"></div>
<div class="b " style="left:352px;top:296px;width:1px;height:11px;background:#fff"></div>
<div class="t " style="left:358px;top:295px;">Ability</div>
<div class="b " style="left:391px;top:296px;width:1px;height:11px;background:#C7C5B2"></div>
<div class="b " style="left:392px;top:296px;width:1px;height:11px;background:#fff"></div>
<div class="t " style="left:398px;top:295px;">HP</div>
<div class="b " style="left:421px;top:296px;width:1px;height:11px;background:#C7C5B2"></div>
<div class="b " style="left:422px;top:296px;width:1px;height:11px;background:#fff"></div>
<div class="t " style="left:428px;top:295px;">Atk</div>
<div class="b " style="left:451px;top:296px;width:1px;height:11px;background:#C7C5B2"></div>
<div class="b " style="left:452px;top:296px;width:1px;height:11px;background:#fff"></div>
<div class="t " style="left:458px;top:295px;">Def</div>
<div class="b " style="left:481px;top:296px;width:1px;height:11px;background:#C7C5B2"></div>
<div class="b " style="left:482px;top:296px;width:1px;height:11px;background:#fff"></div>
<div class="t " style="left:488px;top:295px;">SpA</div>
<div class="b " style="left:511px;top:296px;width:1px;height:11px;background:#C7C5B2"></div>
<div class="b " style="left:512px;top:296px;width:1px;height:11px;background:#fff"></div>
<div class="t " style="left:518px;top:295px;">SpD</div>
<div class="b " style="left:541px;top:296px;width:1px;height:11px;background:#C7C5B2"></div>
<div class="b " style="left:542px;top:296px;width:1px;height:11px;background:#fff"></div>
<div class="t " style="left:548px;top:295px;">Spe</div>
<div class="b " style="left:571px;top:296px;width:1px;height:11px;background:#C7C5B2"></div>
<div class="b " style="left:572px;top:296px;width:1px;height:11px;background:#fff"></div>
<div class="t " style="left:578px;top:295px;">Hidden</div>
<div class="b " style="left:641px;top:296px;width:1px;height:11px;background:#C7C5B2"></div>
<div class="b " style="left:642px;top:296px;width:1px;height:11px;background:#fff"></div>
<div class="t " style="left:648px;top:295px;">Power</div>
<div class="b " style="left:691px;top:296px;width:1px;height:11px;background:#C7C5B2"></div>
<div class="b " style="left:692px;top:296px;width:1px;height:11px;background:#fff"></div>
<div class="t " style="left:698px;top:295px;">50%</div>
<div class="b" style="left:726px;top:291px;width:16px;height:264px;background:linear-gradient(to right,#F3F1EC,#FEFEFB)"></div>
<div class="b sb" style="left:727px;top:291px;width:13px;height:14px"></div>
<svg class="b" style="left:730px;top:296px" width="9" height="6" shape-rendering="crispEdges" fill="#4D6185"><rect x="0" y="5" width="1" height="1"/><rect x="1" y="5" width="1" height="1"/><rect x="7" y="5" width="1" height="1"/><rect x="8" y="5" width="1" height="1"/><rect x="0" y="4" width="1" height="1"/><rect x="1" y="4" width="1" height="1"/><rect x="2" y="4" width="1" height="1"/><rect x="6" y="4" width="1" height="1"/><rect x="7" y="4" width="1" height="1"/><rect x="8" y="4" width="1" height="1"/><rect x="1" y="3" width="1" height="1"/><rect x="2" y="3" width="1" height="1"/><rect x="3" y="3" width="1" height="1"/><rect x="5" y="3" width="1" height="1"/><rect x="6" y="3" width="1" height="1"/><rect x="7" y="3" width="1" height="1"/><rect x="2" y="2" width="1" height="1"/><rect x="3" y="2" width="1" height="1"/><rect x="4" y="2" width="1" height="1"/><rect x="5" y="2" width="1" height="1"/><rect x="6" y="2" width="1" height="1"/><rect x="3" y="1" width="1" height="1"/><rect x="4" y="1" width="1" height="1"/><rect x="5" y="1" width="1" height="1"/><rect x="4" y="0" width="1" height="1"/></svg>
<div class="b sb" style="left:727px;top:308px;width:13px;height:5px"></div>
<div class="b sb" style="left:727px;top:538px;width:13px;height:14px"></div>
<svg class="b" style="left:730px;top:544px" width="9" height="6" shape-rendering="crispEdges" fill="#4D6185"><rect x="0" y="0" width="1" height="1"/><rect x="1" y="0" width="1" height="1"/><rect x="7" y="0" width="1" height="1"/><rect x="8" y="0" width="1" height="1"/><rect x="0" y="1" width="1" height="1"/><rect x="1" y="1" width="1" height="1"/><rect x="2" y="1" width="1" height="1"/><rect x="6" y="1" width="1" height="1"/><rect x="7" y="1" width="1" height="1"/><rect x="8" y="1" width="1" height="1"/><rect x="1" y="2" width="1" height="1"/><rect x="2" y="2" width="1" height="1"/><rect x="3" y="2" width="1" height="1"/><rect x="5" y="2" width="1" height="1"/><rect x="6" y="2" width="1" height="1"/><rect x="7" y="2" width="1" height="1"/><rect x="2" y="3" width="1" height="1"/><rect x="3" y="3" width="1" height="1"/><rect x="4" y="3" width="1" height="1"/><rect x="5" y="3" width="1" height="1"/><rect x="6" y="3" width="1" height="1"/><rect x="3" y="4" width="1" height="1"/><rect x="4" y="4" width="1" height="1"/><rect x="5" y="4" width="1" height="1"/><rect x="4" y="5" width="1" height="1"/></svg>
<div class="b" style="left:17px;top:554px;width:709px;height:17px;background:linear-gradient(to bottom,#F3F1EC,#FEFEFB)"></div>
<div class="b sb" style="left:17px;top:556px;width:14px;height:13px"></div>
<svg class="b" style="left:21px;top:559px" width="6" height="9" shape-rendering="crispEdges" fill="#4D6185"><rect x="5" y="0" width="1" height="1"/><rect x="5" y="1" width="1" height="1"/><rect x="5" y="7" width="1" height="1"/><rect x="5" y="8" width="1" height="1"/><rect x="4" y="0" width="1" height="1"/><rect x="4" y="1" width="1" height="1"/><rect x="4" y="2" width="1" height="1"/><rect x="4" y="6" width="1" height="1"/><rect x="4" y="7" width="1" height="1"/><rect x="4" y="8" width="1" height="1"/><rect x="3" y="1" width="1" height="1"/><rect x="3" y="2" width="1" height="1"/><rect x="3" y="3" width="1" height="1"/><rect x="3" y="5" width="1" height="1"/><rect x="3" y="6" width="1" height="1"/><rect x="3" y="7" width="1" height="1"/><rect x="2" y="2" width="1" height="1"/><rect x="2" y="3" width="1" height="1"/><rect x="2" y="4" width="1" height="1"/><rect x="2" y="5" width="1" height="1"/><rect x="2" y="6" width="1" height="1"/><rect x="1" y="3" width="1" height="1"/><rect x="1" y="4" width="1" height="1"/><rect x="1" y="5" width="1" height="1"/><rect x="0" y="4" width="1" height="1"/></svg>
<div class="b sb" style="left:34px;top:556px;width:570px;height:13px"></div>
<svg class="b" style="left:316px;top:560px" width="8" height="7" shape-rendering="crispEdges"><rect x="0" y="0" width="1" height="7" fill="#EEF4FE"/><rect x="1" y="0" width="1" height="7" fill="#8CB0F8"/><rect x="2" y="0" width="1" height="7" fill="#EEF4FE"/><rect x="3" y="0" width="1" height="7" fill="#8CB0F8"/><rect x="4" y="0" width="1" height="7" fill="#EEF4FE"/><rect x="5" y="0" width="1" height="7" fill="#8CB0F8"/><rect x="6" y="0" width="1" height="7" fill="#EEF4FE"/><rect x="7" y="0" width="1" height="7" fill="#8CB0F8"/></svg>
<div class="b sb" style="left:709px;top:556px;width:14px;height:13px"></div>
<svg class="b" style="left:715px;top:560px" width="6" height="9" shape-rendering="crispEdges" fill="#4D6185"><rect x="0" y="0" width="1" height="1"/><rect x="0" y="1" width="1" height="1"/><rect x="0" y="7" width="1" height="1"/><rect x="0" y="8" width="1" height="1"/><rect x="1" y="0" width="1" height="1"/><rect x="1" y="1" width="1" height="1"/><rect x="1" y="2" width="1" height="1"/><rect x="1" y="6" width="1" height="1"/><rect x="1" y="7" width="1" height="1"/><rect x="1" y="8" width="1" height="1"/><rect x="2" y="1" width="1" height="1"/><rect x="2" y="2" width="1" height="1"/><rect x="2" y="3" width="1" height="1"/><rect x="2" y="5" width="1" height="1"/><rect x="2" y="6" width="1" height="1"/><rect x="2" y="7" width="1" height="1"/><rect x="3" y="2" width="1" height="1"/><rect x="3" y="3" width="1" height="1"/><rect x="3" y="4" width="1" height="1"/><rect x="3" y="5" width="1" height="1"/><rect x="3" y="6" width="1" height="1"/><rect x="4" y="3" width="1" height="1"/><rect x="4" y="4" width="1" height="1"/><rect x="4" y="5" width="1" height="1"/><rect x="5" y="4" width="1" height="1"/></svg>
<div class="b " style="left:726px;top:555px;width:17px;height:17px;background:#ECE9D8"></div>
<div class="t " style="left:20px;top:584px;">Target Frame:</div>
<div class="t " style="left:96px;top:584px;">None</div>
<div class="t " style="left:137px;top:584px;">Coin Flips for Seed:</div>
<div class="t " style="left:235px;top:584px;word-spacing:1.6px">T, H, T, T, H, H, T, T, T, T</div>
<div class="t " style="left:405px;top:584px;">Elm Responses for Seed:</div>
<div class="t " style="left:532px;top:584px;">(E, P skipped)</div>
<div class="t " style="left:606px;top:584px;word-spacing:0.8px">E, K, P, P, P, P, K, P, K, E</div>
<div class="b " style="left:136px;top:602px;width:47px;height:25px;border:1px solid #F8F5E6;box-sizing:border-box"></div>
<div class="b " style="left:137px;top:603px;width:45px;height:23px;border:1px solid #000;box-sizing:border-box;box-shadow:inset 0 0 0 1px #FBF8EA"></div>
<div class="t tc " style="left:137px;width:45px;top:609px;">Map</div>
<div class="b cb" style="left:188px;top:608px;width:13px;height:13px;"></div>
<svg class="b" style="left:191px;top:611px" width="7" height="7" shape-rendering="crispEdges" fill="#21A121"><rect x="6" y="0" width="1" height="1"/><rect x="5" y="1" width="1" height="1"/><rect x="6" y="1" width="1" height="1"/><rect x="0" y="2" width="1" height="1"/><rect x="4" y="2" width="1" height="1"/><rect x="5" y="2" width="1" height="1"/><rect x="6" y="2" width="1" height="1"/><rect x="0" y="3" width="1" height="1"/><rect x="1" y="3" width="1" height="1"/><rect x="3" y="3" width="1" height="1"/><rect x="4" y="3" width="1" height="1"/><rect x="5" y="3" width="1" height="1"/><rect x="0" y="4" width="1" height="1"/><rect x="1" y="4" width="1" height="1"/><rect x="2" y="4" width="1" height="1"/><rect x="3" y="4" width="1" height="1"/><rect x="4" y="4" width="1" height="1"/><rect x="1" y="5" width="1" height="1"/><rect x="2" y="5" width="1" height="1"/><rect x="3" y="5" width="1" height="1"/><rect x="2" y="6" width="1" height="1"/></svg>
<div class="t " style="left:208px;top:609px;">R</div>
<div class="b " style="left:221px;top:605px;width:20px;height:20px;background:#fff;border:1px solid #7F9DB9;box-sizing:border-box"></div>
<div class="t " style="left:224px;top:609px;">42</div>
<div class="b cb" style="left:253px;top:608px;width:13px;height:13px;"></div>
<div class="t " style="left:272px;top:609px;">E</div>
<div class="b " style="left:286px;top:605px;width:20px;height:20px;background:#fff;border:1px solid #7F9DB9;box-sizing:border-box"></div>
<div class="t " style="left:289px;top:609px;"><span class="u">__</span></div>
<div class="b cb" style="left:318px;top:608px;width:13px;height:13px;"></div>
<svg class="b" style="left:321px;top:611px" width="7" height="7" shape-rendering="crispEdges" fill="#21A121"><rect x="6" y="0" width="1" height="1"/><rect x="5" y="1" width="1" height="1"/><rect x="6" y="1" width="1" height="1"/><rect x="0" y="2" width="1" height="1"/><rect x="4" y="2" width="1" height="1"/><rect x="5" y="2" width="1" height="1"/><rect x="6" y="2" width="1" height="1"/><rect x="0" y="3" width="1" height="1"/><rect x="1" y="3" width="1" height="1"/><rect x="3" y="3" width="1" height="1"/><rect x="4" y="3" width="1" height="1"/><rect x="5" y="3" width="1" height="1"/><rect x="0" y="4" width="1" height="1"/><rect x="1" y="4" width="1" height="1"/><rect x="2" y="4" width="1" height="1"/><rect x="3" y="4" width="1" height="1"/><rect x="4" y="4" width="1" height="1"/><rect x="1" y="5" width="1" height="1"/><rect x="2" y="5" width="1" height="1"/><rect x="3" y="5" width="1" height="1"/><rect x="2" y="6" width="1" height="1"/></svg>
<div class="t " style="left:337px;top:609px;">L</div>
<div class="b " style="left:351px;top:605px;width:20px;height:20px;background:#fff;border:1px solid #7F9DB9;box-sizing:border-box"></div>
<div class="t " style="left:354px;top:609px;">3<span class="u">_</span></div>
<div class="t " style="left:382px;top:609px;">Roaming Pokemon Locations:</div>
<div class="t " style="left:531px;top:609px;">R: 29  L: 17  ---  Frame(s) Advanced: 2</div>
</div></body></html>
